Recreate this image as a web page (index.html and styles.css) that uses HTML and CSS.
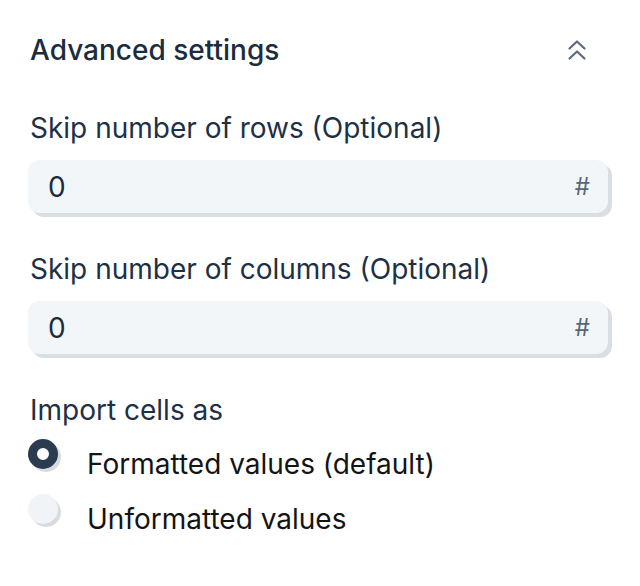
FILE: index.html
```html
<!DOCTYPE html>
<html>
<head>
<meta charset="utf-8">
<link rel="stylesheet" href="styles.css">
</head>
<body>
<div class="panel">
  <div class="header">
    <h2 class="title">Advanced settings</h2>
    <svg class="chev" width="20" height="22" viewBox="0 0 20 22" fill="none" stroke="#5b6b7c" stroke-width="2.2" stroke-linecap="round" stroke-linejoin="round">
      <path d="M2.5 9.5 L10 2.5 L17.5 9.5"/>
      <path d="M2.5 19.5 L10 12.5 L17.5 19.5"/>
    </svg>
  </div>

  <div class="field">
    <label class="label">Skip number of rows (Optional)</label>
    <div class="input"><span class="value">0</span><span class="hash">#</span></div>
  </div>

  <div class="field">
    <label class="label">Skip number of columns (Optional)</label>
    <div class="input"><span class="value">0</span><span class="hash">#</span></div>
  </div>

  <div class="field radios">
    <label class="label">Import cells as</label>
    <div class="radio-row"><span class="radio checked"></span><span class="radio-text">Formatted values (default)</span></div>
    <div class="radio-row"><span class="radio"></span><span class="radio-text">Unformatted values</span></div>
  </div>
</div>
</body>
</html>
```
FILE: styles.css
```css
* { box-sizing: border-box; }
html, body { margin: 0; padding: 0; background: #fff; }
body { font-family: Inter, "Noto Sans", sans-serif; color: #1e2f42; }
.panel { padding: 30px 28px 0 30px; width: 640px; }
.header { display: flex; align-items: center; justify-content: space-between; height: 40px; padding-right: 25px; }
.title { margin: 0; font-size: 28px; line-height: 36px; font-weight: 500; color: #1c2c3f; }
.chev { display: block; }
.field { display: flex; flex-direction: column; margin-top: 40px; }
.field + .field { margin-top: 38px; }
.label { font-size: 28px; line-height: 36px; color: #1e3045; }
.input { margin-top: 14px; margin-left: -2px; height: 53px; width: 580px; background: #f3f6f9; border-radius: 12px; box-shadow: 4px 4px 0 #d9dee3; display: flex; align-items: center; justify-content: space-between; padding: 0 18px 0 20px; }
.value { font-size: 28px; color: #1c2c3f; }
.hash { font-size: 24px; color: #586778; }
.radio-row { display: flex; align-items: flex-start; margin-top: 11px; }
.radio-row + .radio-row { margin-top: 12px; }
.radio { width: 30px; height: 30px; border-radius: 50%; background: #f1f4f7; box-shadow: 3px 3px 0 #d6dbe0; flex: none; margin-left: -2px; }
.radio.checked { background: #fff; border: 9px solid #2b3c50; }
.radio-text { font-size: 28px; color: #141414; margin-left: 29px; line-height: 36px; margin-top: 7px; }
```
